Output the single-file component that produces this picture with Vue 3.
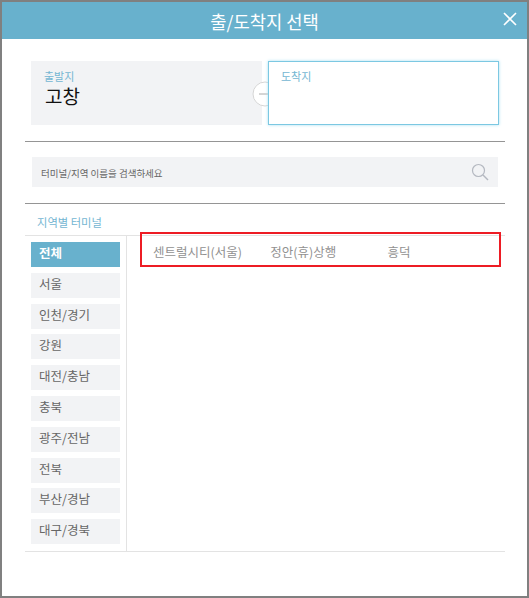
<template>
  <div class="popup">
    <header class="head">
      <h1>출/도착지 선택</h1>
      <button class="close" aria-label="닫기">
        <svg width="16" height="16" viewBox="0 0 16 16">
          <path d="M2 2 L14 14 M14 2 L2 14" stroke="#fff" stroke-width="1.6" fill="none" />
        </svg>
      </button>
    </header>

    <div class="body">
      <section class="route">
        <div class="place from">
          <span class="label">출발지</span>
          <strong>고창</strong>
        </div>
        <div class="place to">
          <span class="label">도착지</span>
        </div>
        <div class="arrow">
          <svg width="26" height="26" viewBox="0 0 26 26">
            <circle cx="13" cy="13" r="12" fill="#fff" stroke="#d6d6d6" />
            <path d="M7 13 H20" stroke="#aaa" fill="none" />
          </svg>
        </div>
      </section>

      <section class="search">
        <div class="search-box">
          <span class="hint">터미널/지역 이름을 검색하세요</span>
          <svg width="18" height="18" viewBox="0 0 18 18">
            <circle cx="7.5" cy="7.5" r="6" fill="none" stroke="#b4b8c0" stroke-width="1.2" />
            <path d="M12 12 L17 17" stroke="#b4b8c0" stroke-width="1.4" fill="none" />
          </svg>
        </div>
      </section>

      <p class="area-title">지역별 터미널</p>

      <section class="terminals">
        <ul class="regions">
          <li v-for="(r, i) in regions" :key="r" :class="{ on: i === 0 }">{{ r }}</li>
        </ul>
        <div class="results">
          <a v-for="t in terminals" :key="t">{{ t }}</a>
          <div class="mark"></div>
        </div>
      </section>
    </div>
  </div>
</template>

<script setup>
const regions = ['전체', '서울', '인천/경기', '강원', '대전/충남', '충북', '광주/전남', '전북', '부산/경남', '대구/경북']
const terminals = ['센트럴시티(서울)', '정안(휴)상행', '흥덕']
</script>

<style>
html, body {
  margin: 0;
  background: #fff;
}
</style>

<style scoped>
.popup {
  box-sizing: border-box;
  width: 529px;
  height: 598px;
  border: 2px solid #808080;
  background: #fff;
  font-family: "Noto Sans CJK KR", "Liberation Sans", sans-serif;
}

.head {
  position: relative;
  height: 37px;
  background: #68b1cd;
  display: flex;
  align-items: center;
  justify-content: center;
}

.head h1 {
  margin: 0;
  font-size: 17.7px;
  font-weight: 400;
  color: #fff;
}

.close {
  position: absolute;
  right: 9px;
  top: 9px;
  width: 16px;
  height: 16px;
  padding: 0;
  border: 0;
  background: none;
  display: flex;
}

.body {
  padding: 22px 22px 0 23px;
}

.route {
  position: relative;
  display: flex;
  justify-content: space-between;
  margin: 0 0 15px;
  padding: 0 6px;
  height: 80px;
  border-bottom: 1px solid #959595;
}

.place {
  box-sizing: border-box;
  width: 231px;
  height: 64px;
  padding: 8px 13px;
  display: flex;
  flex-direction: column;
  align-items: flex-start;
}

.from {
  background: #f2f3f5;
}

.to {
  position: relative;
  z-index: 1;
  padding: 7px 12px;
  background: #fff;
  border: 1px solid #7cc8e2;
  box-shadow: 0 0 3px #a9e0f2;
}

.label {
  font-size: 11px;
  line-height: 14px;
  color: #74b6d2;
}

.place strong {
  margin: 1px 0 0 1px;
  font-size: 19px;
  line-height: 24px;
  font-weight: 400;
  color: #111;
}

.arrow {
  position: absolute;
  left: 227px;
  top: 20px;
  display: flex;
}

.search {
  padding: 0 7px 16px;
  border-bottom: 1px solid #959595;
}

.search-box {
  height: 30px;
  padding: 0 9px;
  background: #f2f3f5;
  display: flex;
  align-items: center;
  justify-content: space-between;
  font-size: 9.5px;
  color: #666;
}

.hint {
  padding-top: 2px;
}

.area-title {
  margin: 0;
  padding: 11px 12px 5px;
  font-size: 11.3px;
  line-height: 15px;
  color: #74b6d2;
}

.terminals {
  display: flex;
  height: 315px;
  border-top: 1px solid #e3e3e3;
  border-bottom: 1px solid #e3e3e3;
}

.regions {
  flex: none;
  list-style: none;
  margin: 0;
  padding: 6px 6px 0;
  width: 89px;
  border-right: 1px solid #e3e3e3;
  display: flex;
  flex-direction: column;
  gap: 5.8px;
}

.regions li {
  height: 25px;
  padding-left: 8px;
  background: #f2f3f5;
  font-size: 12.5px;
  line-height: 22px;
  color: #666;
}

.regions li.on {
  background: #68b1cd;
  color: #fff;
  font-weight: 700;
}

.results {
  position: relative;
  flex: 1;
  min-width: 0;
  display: flex;
  align-items: flex-start;
  padding: 7px 0 0 26px;
}

.results a {
  flex: none;
  width: 117.2px;
  font-size: 12.5px;
  line-height: 18px;
  color: #919191;
}

.mark {
  position: absolute;
  left: 13px;
  top: -4px;
  width: 357px;
  height: 31px;
  border: 2px solid #ed1c24;
}
</style>
